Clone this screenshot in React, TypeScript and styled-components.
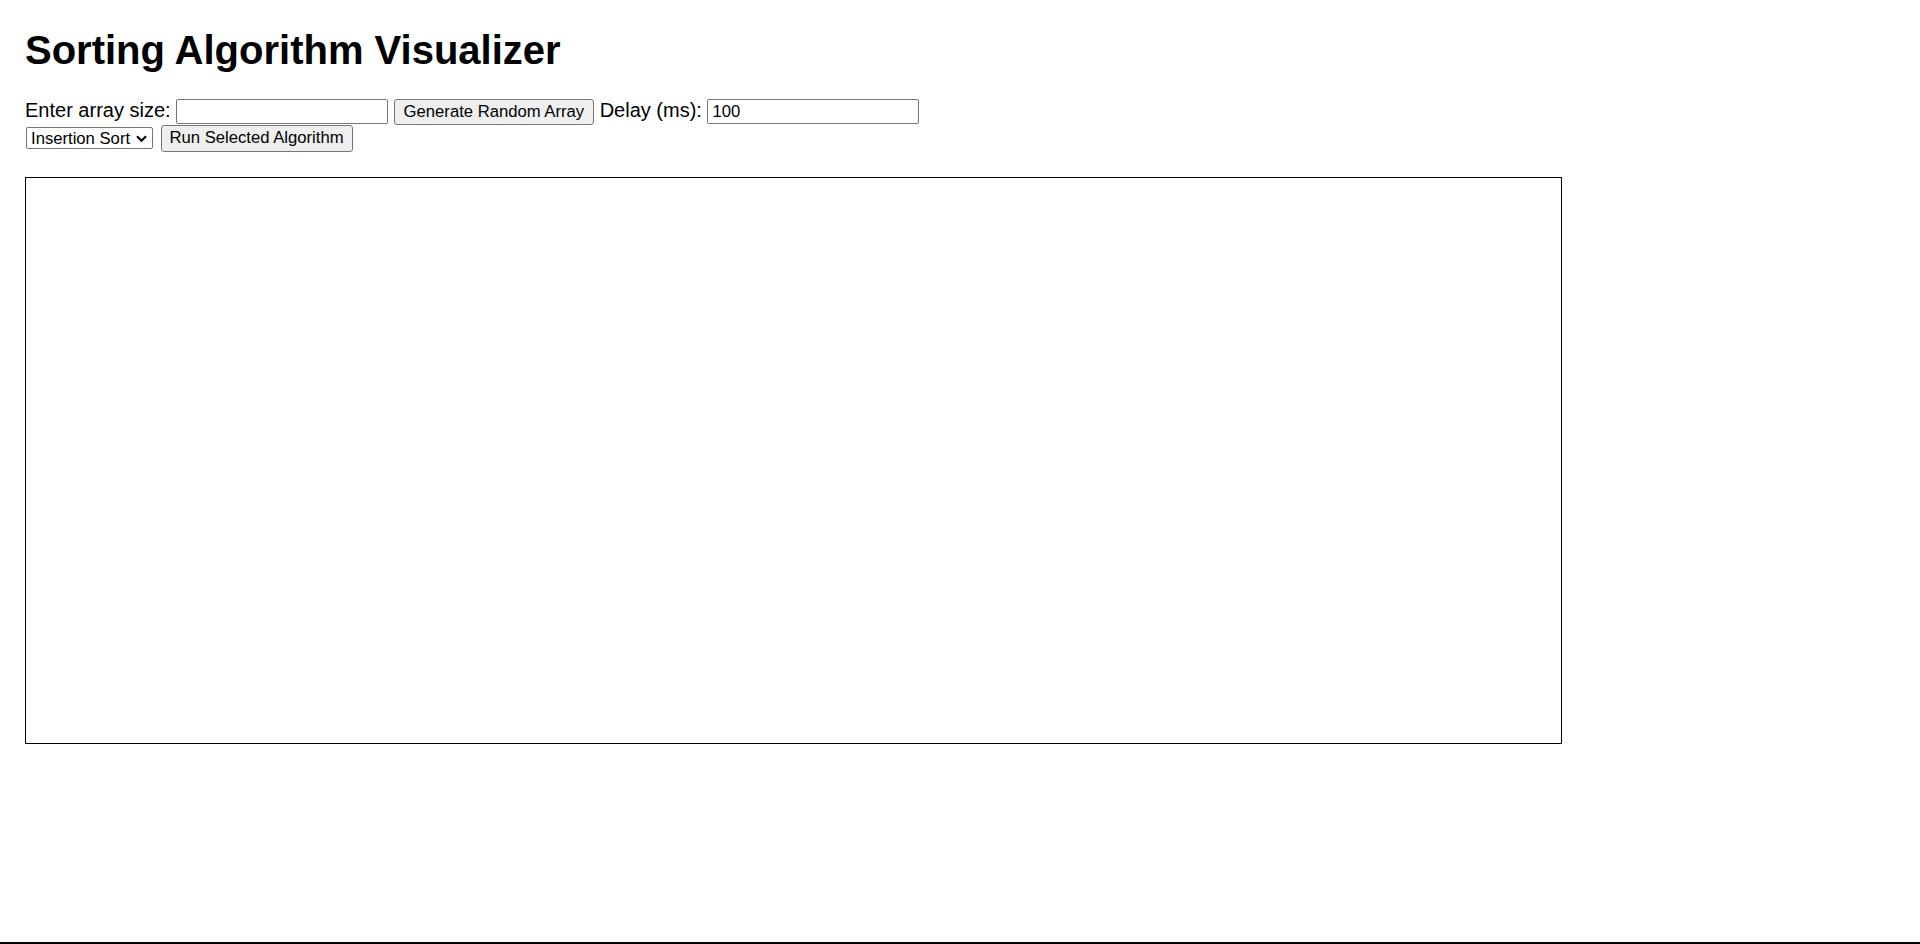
import React, { useEffect, useRef, useState } from "react";
import styled, { createGlobalStyle } from "styled-components";

const algorithms = ["Bubble Sort", "Selection Sort", "Insertion Sort", "Merge Sort", "Quick Sort"];

const sleep = (ms: number) => new Promise((resolve) => setTimeout(resolve, ms));

export default function App() {
  const [size, setSize] = useState("");
  const [delay, setDelay] = useState("100");
  const [algorithm, setAlgorithm] = useState("Insertion Sort");
  const [values, setValues] = useState<number[]>([]);
  const [active, setActive] = useState<number[]>([]);
  const canvasRef = useRef<HTMLCanvasElement>(null);

  useEffect(() => {
    const canvas = canvasRef.current;
    if (!canvas) return;
    canvas.width = canvas.clientWidth;
    canvas.height = canvas.clientHeight;
    const ctx = canvas.getContext("2d");
    if (!ctx || values.length === 0) return;
    ctx.clearRect(0, 0, canvas.width, canvas.height);
    const max = Math.max(...values);
    const barWidth = canvas.width / values.length;
    values.forEach((v, i) => {
      const h = (v / max) * (canvas.height - 10);
      ctx.fillStyle = active.includes(i) ? "#d33" : "#4a7bd0";
      ctx.fillRect(i * barWidth + 1, canvas.height - h, Math.max(barWidth - 2, 1), h);
    });
  }, [values, active]);

  const generate = () => {
    const n = Math.min(Math.max(parseInt(size, 10) || 0, 0), 500);
    setActive([]);
    setValues(Array.from({ length: n }, () => Math.floor(Math.random() * 100) + 1));
  };

  const run = async () => {
    const arr = [...values];
    const wait = parseInt(delay, 10) || 0;
    if (algorithm === "Insertion Sort") {
      for (let i = 1; i < arr.length; i++) {
        let j = i;
        while (j > 0 && arr[j - 1] > arr[j]) {
          [arr[j - 1], arr[j]] = [arr[j], arr[j - 1]];
          setValues([...arr]);
          setActive([j - 1, j]);
          await sleep(wait);
          j--;
        }
      }
    } else {
      for (let i = 0; i < arr.length; i++) {
        for (let j = 0; j < arr.length - i - 1; j++) {
          if (arr[j] > arr[j + 1]) {
            [arr[j], arr[j + 1]] = [arr[j + 1], arr[j]];
            setValues([...arr]);
            setActive([j, j + 1]);
            await sleep(wait);
          }
        }
      }
    }
    setActive([]);
  };

  return (
    <>
      <GlobalStyle />
      <Page>
        <Title>Sorting Algorithm Visualizer</Title>
        <ControlRow>
          <Label htmlFor="array-size">Enter array size:</Label>
          <TextInput id="array-size" type="number" value={size} onChange={(e) => setSize(e.target.value)} />
          <Button onClick={generate}>Generate Random Array</Button>
          <Label htmlFor="delay">Delay (ms):</Label>
          <TextInput id="delay" type="number" value={delay} onChange={(e) => setDelay(e.target.value)} />
        </ControlRow>
        <ActionRow>
          <Select value={algorithm} onChange={(e) => setAlgorithm(e.target.value)}>
            {algorithms.map((a) => (
              <option key={a} value={a}>{a}</option>
            ))}
          </Select>
          <Button $tall onClick={run}>Run Selected Algorithm</Button>
        </ActionRow>
        <Board ref={canvasRef} />
      </Page>
      <BottomRule />
    </>
  );
}

const GlobalStyle = createGlobalStyle`
  html, body {
    margin: 0;
    padding: 0;
    background: #fff;
    overflow: hidden;
  }

  body {
    font-family: "Liberation Sans", Arial, sans-serif;
    font-size: 20px;
    color: #000;
  }

  input[type=number]::-webkit-inner-spin-button,
  input[type=number]::-webkit-outer-spin-button {
    -webkit-appearance: none;
    margin: 0;
  }
`

const Page = styled.div`
  padding: 0 25px;
`

const Title = styled.h1`
  font-size: 40px;
  font-weight: 700;
  margin: 26.8px 0 26px;
  line-height: 46px;
`

const ControlRow = styled.div`
  display: flex;
  align-items: baseline;
  gap: 5.5px;
  height: 26px;
`

const ActionRow = styled.div`
  display: flex;
  align-items: center;
  gap: 7.5px;
  height: 27px;
  margin-bottom: 25px;
`

const Label = styled.label`
  font-size: 20px;
  line-height: 23px;
`

const TextInput = styled.input`
  box-sizing: border-box;
  width: 212px;
  height: 25px;
  padding: 0 4px;
  font-family: "Liberation Sans", Arial, sans-serif;
  font-size: 16.67px;
  color: #000;
  border: 1px solid #767676;
  border-radius: 2px;
  background: #fff;
  -moz-appearance: textfield;
  outline: none;
`

const Button = styled.button<{ $tall?: boolean }>`
  box-sizing: border-box;
  height: ${(p) => (p.$tall ? "27px" : "26px")};
  padding: ${(p) => (p.$tall ? "0 8px" : "0 9px")};
  font-family: "Liberation Sans", Arial, sans-serif;
  font-size: 16.67px;
  color: #000;
  background: #efefef;
  border: 1px solid #767676;
  border-radius: 3px;
  cursor: pointer;

  &:hover {
    background: #e5e5e5;
  }
`

const Select = styled.select`
  box-sizing: border-box;
  width: 127px;
  height: 22px;
  margin-left: 1px;
  padding: 0 20px 0 4px;
  font-family: "Liberation Sans", Arial, sans-serif;
  font-size: 16.67px;
  color: #000;
  border: 1px solid #767676;
  border-radius: 2px;
  appearance: none;
  background-color: #fff;
  background-image: url("data:image/svg+xml,%3Csvg xmlns='http://www.w3.org/2000/svg' width='11' height='7' viewBox='0 0 11 7'%3E%3Cpath d='M1 1.2l4.5 4.5 4.5-4.5' fill='none' stroke='black' stroke-width='2.1'/%3E%3C/svg%3E");
  background-repeat: no-repeat;
  background-position: right 5px center;
  outline: none;
`

const Board = styled.canvas`
  display: block;
  width: 1535px;
  height: 565px;
  border: 1px solid #000;
`

const BottomRule = styled.div`
  margin-top: 198px;
  height: 2px;
  background: #000;
`
